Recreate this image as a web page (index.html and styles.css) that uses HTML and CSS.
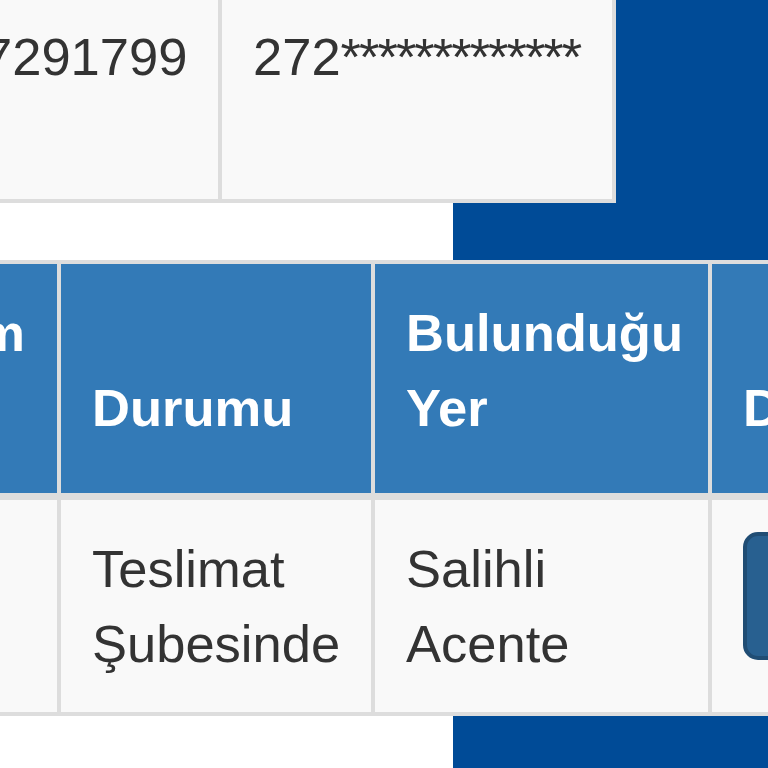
FILE: index.html
```html
<!DOCTYPE html>
<html lang="tr">
<head>
<meta charset="utf-8">
<title>Kargo Takip</title>
<link rel="stylesheet" href="styles.css">
</head>
<body>
<main class="panel">
  <section class="grid info">
    <div class="cell">7291799</div>
    <div class="cell">272<span class="mask">*************</span></div>
  </section>
  <section class="grid track">
    <div class="th">Gönderim Tarihi</div>
    <div class="th">Durumu</div>
    <div class="th">Bulunduğu Yer</div>
    <div class="th">Detay</div>
    <div class="td">&nbsp;</div>
    <div class="td">Teslimat Şubesinde</div>
    <div class="td">Salihli Acente</div>
    <div class="td"><button class="btn" type="button">Detay</button></div>
  </section>
</main>
</body>
</html>
```
FILE: styles.css
```css
* { box-sizing: border-box; }
html, body { margin: 0; padding: 0; }
body {
  width: 768px;
  height: 768px;
  overflow: hidden;
  background: #004b97;
  font-family: "Liberation Sans", Arial, Helvetica, sans-serif;
  color: #333;
  font-size: 52.5px;
  line-height: 75px;
}
.panel {
  display: flow-root;
  width: 453px;
  height: 768px;
  background: #fff;
}
.grid {
  display: grid;
  background: #ddd;
  padding: 4px;
  column-gap: 4px;
}
.info {
  width: 668px;
  margin-left: -52px;
  margin-top: -15px;
  grid-template-columns: 266px 390px;
}
.cell {
  background: #f9f9f9;
  padding: 30px 31px;
  height: 210px;
  white-space: nowrap;
}
.mask { letter-spacing: -2px; }
.track {
  width: 1274px;
  margin-left: -258px;
  margin-top: 57px;
  grid-template-columns: 311px 310px 333px 300px;
  row-gap: 7px;
}
.th {
  background: #337ab7;
  color: #fff;
  font-weight: bold;
  height: 229px;
  padding: 31px 31px 48px;
  display: flex;
  flex-direction: column;
  justify-content: flex-end;
}
.td {
  background: #f9f9f9;
  height: 212px;
  padding: 31px;
}
.btn {
  display: inline-block;
  margin-top: 1px;
  height: 128px;
  padding: 22.5px 45px;
  border: 4px solid #204d74;
  border-radius: 15px;
  background: #286090;
  color: #fff;
  font: inherit;
  line-height: 75px;
}
```
